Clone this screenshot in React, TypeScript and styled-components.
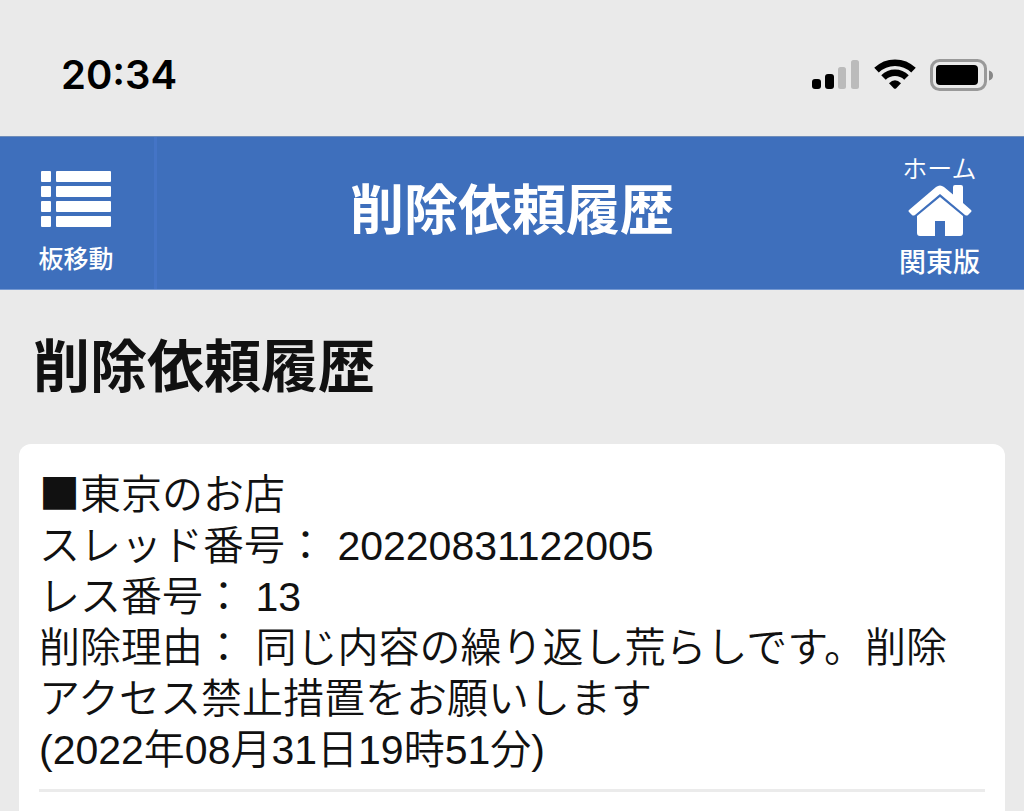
import React from "react";
import styled, { createGlobalStyle } from "styled-components";

const GlobalStyle = createGlobalStyle`
  *, *::before, *::after { box-sizing: border-box; }
  body {
    margin: 0;
    background: #eaeaea;
    color: #111;
    font-family: "Liberation Sans", "Noto Sans CJK JP", sans-serif;
  }
`;

const Page = styled.div`
  display: flex;
  flex-direction: column;
  min-height: 100vh;
  overflow: hidden;
`;

const StatusBar = styled.div`
  display: flex;
  align-items: center;
  justify-content: space-between;
  height: 136px;
  padding: 14px 30px 0 61px;
`;

const Clock = styled.time`
  color: #000;
  font: 600 40px/48px Inter, sans-serif;
`;

const StatusIcons = styled.div`
  display: flex;
  align-items: center;
  gap: 14px;
`;

const Header = styled.header`
  display: grid;
  grid-template-columns: 157px 1fr 157px;
  height: 154px;
  background: #3e6fbc;
  border-top: 1px solid #6f8db9;
  border-bottom: 1px solid #7599d2;
  color: #fff;
`;

const BoardButton = styled.button`
  display: flex;
  flex-direction: column;
  align-items: center;
  gap: 12px;
  padding: 34px 2px 0 0;
  border: 0;
  border-right: 3px solid #4474c6;
  background: none;
  color: inherit;
  font: 500 25px/36px "Noto Sans CJK JP", sans-serif;
  cursor: pointer;
`;

const HeaderTitle = styled.div`
  display: flex;
  align-items: center;
  justify-content: center;
  padding-bottom: 12px;
  font: 700 54px/80px "Noto Sans CJK JP", sans-serif;
  white-space: nowrap;
`;

const HomeLink = styled.a`
  display: flex;
  flex-direction: column;
  align-items: center;
  padding: 12px 12px 0 0;
  color: inherit;
  font: 500 27px/36px "Noto Sans CJK JP", sans-serif;
  text-decoration: none;
`;

const HomeCaption = styled.span`
  font-size: 25px;
  font-weight: 350;
`;

const HomeRegion = styled.span`
  margin-top: 6px;
`;

const Heading = styled.h1`
  margin: 0;
  padding: 32px 33px 42px;
  font: 700 57px/80px "Noto Sans CJK JP", sans-serif;
`;

const Card = styled.main`
  flex: 1;
  margin: 0 19px;
  padding: 26px 20px 0;
  border-radius: 12px 12px 0 0;
  background: #fff;
`;

const Entry = styled.article`
  padding-bottom: 13px;
  border-bottom: 3px solid #ebebeb;
  font-size: 41px;
  font-weight: 350;
  line-height: 51px;
`;

const Line = styled.p`
  margin: 0;
`;

const Marker = styled.span`
  font-family: "Noto Sans CJK JP", sans-serif;
  line-height: 1;
`;

const SignalIcon = () => (
  <svg width="48" height="32" viewBox="0 0 48 32" aria-hidden="true">
    <rect x="0" y="20" width="9" height="10" rx="3" />
    <rect x="13" y="15" width="9" height="15" rx="3" />
    <rect x="26" y="8" width="8" height="22" rx="2.5" fill="#bbb" />
    <rect x="39" y="1" width="8" height="29" rx="2.5" fill="#bbb" />
  </svg>
);

const WifiIcon = () => (
  <svg width="42" height="32" viewBox="0 0 42 32" aria-hidden="true">
    <g fill="none" stroke="#000" strokeWidth="6.5">
      <path d="M2.500 11.200a26.500 26.500 0 0 1 37 0" />
      <path d="M9.500 18.500a16.500 16.500 0 0 1 23 0" />
    </g>
    <path d="M15 24.200Q21 18.400 27 24.200L22 29.400Q21 30.200 20 29.400Z" />
  </svg>
);

const BatteryIcon = () => (
  <svg width="64" height="32" viewBox="0 0 64 32" aria-hidden="true">
    <rect x="1.5" y="1.5" width="54" height="29" rx="8" fill="none" stroke="#999" strokeWidth="3" />
    <rect x="6" y="6" width="42" height="20" rx="4" />
    <path d="M59 11.5q4 1 4 5t-4 5z" fill="#888" />
  </svg>
);

const ListIcon = () => (
  <svg width="72" height="56" viewBox="0 0 72 56" fill="#fff" aria-hidden="true">
    {[0, 15, 30, 45].map((y) => (
      <React.Fragment key={y}>
        <rect x="1" y={y} width="10" height="11" rx="1" />
        <rect x="16" y={y} width="55" height="11" rx="1" />
      </React.Fragment>
    ))}
  </svg>
);

const HouseIcon = () => (
  <svg width="64" height="52" viewBox="0 0 64 52" fill="#fff" aria-hidden="true">
    <path d="M1 25 28 2Q32-1 36 2L45 9.500V2Q45 0 47 0H53Q55 0 55 2V18L63 25Q64 26 63 27L60 30Q59 31 57 30L32 9 7 30Q5 31 4 30L1 27Q0 26 1 25Z" />
    <path d="M32 12 55 31V48Q55 51 52 51H37V36H27V51H12Q9 51 9 48V31Z" />
  </svg>
);

export default function App() {
  return (
    <>
      <GlobalStyle />
      <Page lang="ja">
        <StatusBar>
          <Clock>20:34</Clock>
          <StatusIcons>
            <SignalIcon />
            <WifiIcon />
            <BatteryIcon />
          </StatusIcons>
        </StatusBar>
        <Header>
          <BoardButton type="button">
            <ListIcon />
            板移動
          </BoardButton>
          <HeaderTitle>削除依頼履歴</HeaderTitle>
          <HomeLink href="#home">
            <HomeCaption>ホーム</HomeCaption>
            <HouseIcon />
            <HomeRegion>関東版</HomeRegion>
          </HomeLink>
        </Header>
        <Heading>削除依頼履歴</Heading>
        <Card>
          <Entry>
            <Line>
              <Marker>■</Marker>東京のお店
            </Line>
            <Line>スレッド番号： 20220831122005</Line>
            <Line>レス番号： 13</Line>
            <Line>
              削除理由： 同じ内容の繰り返し荒らしです。削除アクセス禁止措置をお願いします
            </Line>
            <Line>(2022年08月31日19時51分)</Line>
          </Entry>
        </Card>
      </Page>
    </>
  );
}
